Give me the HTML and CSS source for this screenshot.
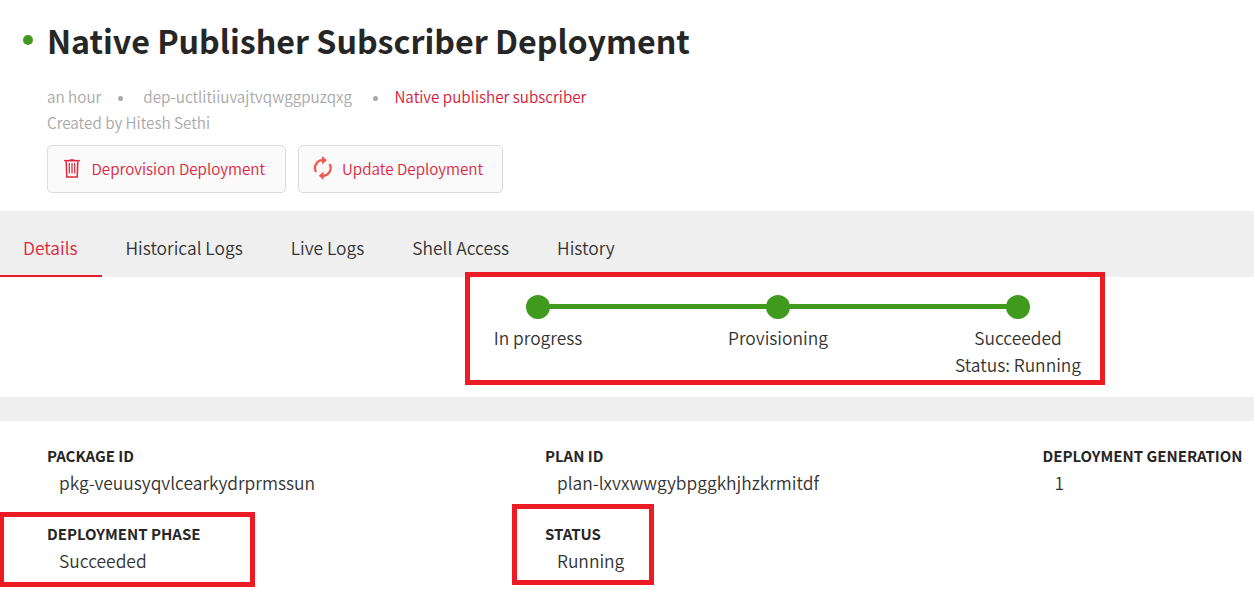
FILE: index.html
```html
<!DOCTYPE html>
<html lang="en">
<head>
<meta charset="utf-8">
<title>Native Publisher Subscriber Deployment</title>
<link rel="stylesheet" href="styles.css">
</head>
<body>
<header class="header">
  <div class="title-row"><span class="state-dot"></span><h1 class="title">Native Publisher Subscriber Deployment</h1></div>
  <div class="meta">
    <span class="meta-age">an hour</span><span class="sep"></span><span class="meta-id">dep-uctlitiiuvajtvqwggpuzqxg</span><span class="sep sep-last"></span><a class="meta-link">Native publisher subscriber</a>
  </div>
  <div class="meta"><span class="meta-author">Created by Hitesh Sethi</span></div>
  <div class="actions">
    <button class="btn btn-remove">
      <svg class="icon-trash" width="16" height="19" viewBox="0 0 16 19" fill="none" stroke="#e0253a"><path d="M.2 1.7h15.6" stroke-width="1.6"/><path d="M5.2 1.2Q8 0 10.8 1.2" stroke-width="1"/><path d="M2.2 2.5l.6 15.5h10.4l.6-15.5" stroke-width="1.5"/><path d="M5.3 4v10.5M8 4v10.5M10.7 4v10.5" stroke-width="1.2"/></svg>
      <span class="btn-text">Deprovision Deployment</span>
    </button>
    <button class="btn btn-update">
      <svg class="icon-sync" width="20" height="24" viewBox="0 0 20 24"><g fill="none" stroke="#f0584f" stroke-width="2.3"><path d="M3.1 16A7.8 7.8 0 0 1 10 4.2"/><path d="M16.5 8A7.8 7.8 0 0 1 9.6 19.8"/></g><path d="M9.1 0l4.7 4.2-4.7 4.2zM10.5 24l-4.7-4.2 4.7-4.2z" fill="#f0584f"/></svg>
      <span class="btn-text">Update Deployment</span>
    </button>
  </div>
</header>
<nav class="tabs">
  <a class="tab active">Details</a><a class="tab">Historical Logs</a><a class="tab">Live Logs</a><a class="tab">Shell Access</a><a class="tab">History</a>
</nav>
<section class="progress">
  <div class="step"><span class="dot"></span><span>In progress</span></div>
  <div class="step"><span class="dot"></span><span>Provisioning</span></div>
  <div class="step"><span class="dot"></span><span>Succeeded</span><span>Status: Running</span></div>
</section>
<dl class="details">
  <div class="field"><dt>PACKAGE ID</dt><dd>pkg-veuusyqvlcearkydrprmssun</dd></div>
  <div class="field"><dt>PLAN ID</dt><dd>plan-lxvxwwgybpggkhjhzkrmitdf</dd></div>
  <div class="field"><dt>DEPLOYMENT GENERATION</dt><dd>1</dd></div>
  <div class="field"><dt>DEPLOYMENT PHASE</dt><dd>Succeeded</dd></div>
  <div class="field"><dt>STATUS</dt><dd>Running</dd></div>
</dl>
<div class="mark mark-progress"></div>
<div class="mark mark-phase"></div>
<div class="mark mark-status"></div>
</body>
</html>
```
FILE: styles.css
```css
* { box-sizing: border-box; }
body {
  position: relative;
  margin: 0;
  height: 589px;
  overflow: hidden;
  background: #fff;
  color: #333;
  font: 400 17.4px/27px "Noto Sans CJK SC DemiLight", "Noto Sans CJK SC", "Open Sans", sans-serif;
  white-space: nowrap;
}
.header { height: 211px; padding: 14px 0 0 47px; }
.title-row { display: flex; margin: 0 0 18px -24px; }
.state-dot { width: 10px; height: 10px; margin: 21px 14px 0 0; border-radius: 50%; background: #3f9a1d; }
.title { margin: 0; font: 700 32.2px/52px "Noto Sans CJK SC", "Open Sans", sans-serif; color: #262626; }
.meta { display: flex; align-items: center; height: 26px; padding-bottom: 2px; font-size: 15.22px; line-height: 26px; color: #a8a8a8; }
.sep { width: 5px; height: 5px; margin: 5px 20.5px 0 16.5px; border-radius: 50%; background: #a8a8a8; }
.sep-last { margin-right: 16.5px; margin-left: 21px; }
.meta-link { color: #d9153a; }
.actions { display: flex; gap: 12px; margin-top: 9px; }
.btn {
  display: flex;
  align-items: center;
  height: 48px;
  padding: 0 0 0 16.5px;
  border: 1px solid #dcdcdc;
  border-radius: 5px;
  background: #fafafa;
  color: #e0253a;
  font: inherit;
  font-size: 15.2px;
  line-height: 26px;
}
.btn-remove { width: 239px; gap: 11px; }
.btn-update { width: 205px; gap: 9px; padding-left: 14px; }
.btn-text { padding-bottom: 2px; }
.icon-trash, .icon-sync { flex: none; margin-bottom: 2px; }
.icon-trash { margin-left: -.5px; margin-right: .5px; }
.tabs { display: flex; height: 66px; background: #efefef; }
.tab { height: 66px; padding: 23px 24px 0; }
.tab.active { width: 101.5px; padding-left: 23px; border-bottom: 2px solid #e61c32; color: #e0253a; }
.progress { display: flex; justify-content: center; gap: 0; height: 120px; padding: 18px 0 0 302px; }
.step { display: flex; flex-direction: column; align-items: center; width: 240px; }
.dot { width: 24px; height: 24px; margin-bottom: 5px; border-radius: 50%; background: #3f9a1d; }
.step:not(:last-child) .dot::after {
  content: "";
  display: block;
  width: 240px;
  height: 5px;
  margin: 9px 0 0 12px;
  background: #3f9a1d;
}
.details {
  display: grid;
  grid-template-columns: 498px 497.5px auto;
  row-gap: 24px;
  margin: 0;
  padding: 21px 0 0 47px;
  border-top: 24px solid #efefef;
}
dt { font: 700 15px/27px "Noto Sans CJK SC", "Open Sans", sans-serif; color: #262626; }
dd { margin: 0 0 0 12px; }
.mark { position: absolute; border: 5px solid #ed1c24; }
.mark-progress { left: 465px; top: 272px; width: 640px; height: 113px; }
.mark-phase { left: -1px; top: 512px; width: 256px; height: 75px; }
.mark-status { left: 512px; top: 504px; width: 142px; height: 81px; }
```
